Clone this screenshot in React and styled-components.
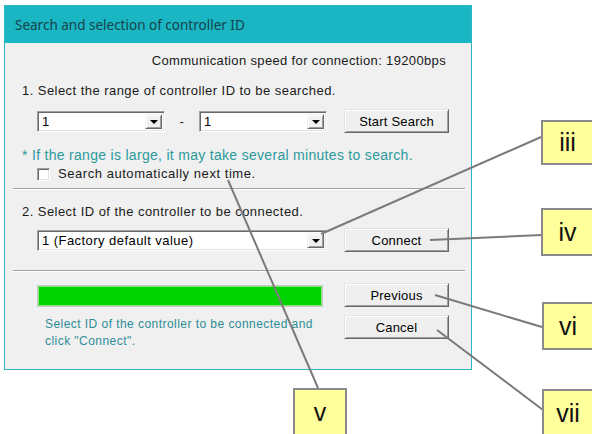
import React from "react";
import styled, { createGlobalStyle } from "styled-components";

const Global = createGlobalStyle`
  html, body { margin: 0; padding: 0; background: #fff; }
  body { font-family: "Liberation Sans", Arial, sans-serif; }
`;

const Page = styled.div`
  position: relative;
  width: 592px;
  height: 434px;
  overflow: hidden;
  background: #fff;
`;

const Dialog = styled.div`
  margin: 5px 0 0 4px;
  width: 466px;
  border: 1px solid #2bb8c4;
  background: #f0f0f0;
`;

const TitleBar = styled.div`
  height: 37px;
  background: #1bb6c4;
  display: flex;
  align-items: center;
  padding-left: 10px;
  font-family: "Noto Sans", "Open Sans", sans-serif;
  font-size: 13.5px;
  color: #17434a;
`;

const Body = styled.div`
  padding: 10px 0 19px 0;
  font-size: 13px;
  letter-spacing: 0.45px;
  color: #1a1a1a;
`;

const SpeedLine = styled.div`
  text-align: right;
  padding-right: 25px;
  line-height: 16px;
  letter-spacing: 0.35px;
`;

const Label = styled.div`
  line-height: 16px;
  padding-left: 17px;
  margin-top: ${(p) => p.$mt}px;
`;

const Note = styled.div`
  line-height: 16px;
  padding-left: 17px;
  margin-top: 14px;
  color: #2b9a9c;
  font-size: 14px;
  letter-spacing: 0.3px;
`;

const Row = styled.div`
  display: flex;
  align-items: center;
  padding-left: 32px;
  margin-top: ${(p) => p.$mt}px;
  height: 24px;
`;

const Combo = styled.div`
  width: ${(p) => p.$w}px;
  height: 21px;
  box-sizing: border-box;
  background: #fff;
  border: 1px solid;
  border-color: #a0a0a0 #ffffff #ffffff #a0a0a0;
  box-shadow: inset 1px 1px #696969, inset -1px -1px #e3e3e3;
  display: flex;
  align-items: stretch;
`;

const ComboText = styled.div`
  flex: 1;
  padding-left: 4px;
  line-height: 19px;
  font-size: 13px;
  color: #000;
  white-space: nowrap;
`;

const ArrowBtn = styled.div`
  width: 17px;
  margin: 2px 2px 2px 0;
  box-sizing: border-box;
  background: #f0f0f0;
  border: 1px solid;
  border-color: #f0f0f0 #696969 #696969 #f0f0f0;
  box-shadow: inset 1px 1px #fff, inset -1px -1px #a0a0a0;
  display: flex;
  align-items: center;
  justify-content: center;
`;

const Triangle = styled.div`
  width: 0;
  height: 0;
  border-left: 4px solid transparent;
  border-right: 4px solid transparent;
  border-top: 4px solid #000;
  margin-top: 1px;
`;

const Dash = styled.div`
  width: 34px;
  text-align: center;
  font-size: 13px;
`;

const Button = styled.div`
  width: 105px;
  height: 24px;
  box-sizing: border-box;
  margin-left: ${(p) => p.$ml || 0}px;
  background: #efefef;
  border: 1px solid;
  border-color: #e3e3e3 #696969 #696969 #e3e3e3;
  box-shadow: inset 1px 1px #fff, inset -1px -1px #a0a0a0;
  display: flex;
  align-items: center;
  justify-content: center;
  font-size: 13px;
  letter-spacing: 0.2px;
  color: #000;
`;

const CheckRow = styled.label`
  display: flex;
  align-items: center;
  padding-left: 32px;
  margin-top: 3px;
  height: 16px;
  line-height: 16px;
  letter-spacing: 0.55px;
`;

const CheckBox = styled.span`
  width: 13px;
  height: 13px;
  box-sizing: border-box;
  background: #fff;
  border: 1px solid;
  border-color: #a0a0a0 #fff #fff #a0a0a0;
  box-shadow: inset 1px 1px #696969, inset -1px -1px #e3e3e3;
  margin-right: 8px;
`;

const Separator = styled.div`
  margin: ${(p) => p.$mt}px 6px 0 8px;
  height: 0;
  border-top: 1px solid #a0a0a0;
  border-bottom: 1px solid #ffffff;
`;

const Footer = styled.div`
  display: flex;
  padding-left: 32px;
  margin-top: 11px;
`;

const FooterLeft = styled.div`
  width: 286px;
  display: flex;
  flex-direction: column;
`;

const Progress = styled.div`
  margin-top: 2px;
  height: 22px;
  box-sizing: border-box;
  border: 1px solid #c8c8c8;
  background: #00d400;
  box-shadow: inset 0 0 0 1px #7fe07f;
`;

const Hint = styled.div`
  margin-top: 9px;
  padding-left: 8px;
  font-size: 12px;
  line-height: 17px;
  letter-spacing: 0.45px;
  white-space: nowrap;
  color: #2d8d96;
`;

const ButtonCol = styled.div`
  display: flex;
  flex-direction: column;
  gap: 8px;
  margin-left: 21px;
`;

const Callout = styled.div`
  position: absolute;
  left: ${(p) => p.$x}px;
  top: ${(p) => p.$y}px;
  width: ${(p) => p.$w}px;
  height: ${(p) => p.$h}px;
  box-sizing: border-box;
  background: #ffff9c;
  border: 2px solid #8a8a8a;
  display: flex;
  align-items: center;
  justify-content: center;
  font-family: "Liberation Sans", Arial, sans-serif;
  font-size: 25px;
  color: #111;
`;

const Leaders = styled.svg`
  position: absolute;
  left: 0;
  top: 0;
  pointer-events: none;
`;

export default function App() {
  const lines = [
    [321, 234, 541, 137],
    [430, 240, 542, 235],
    [435, 295, 542, 327],
    [437, 330, 543, 410],
    [228, 180, 318, 388],
  ];
  return (
    <>
      <Global />
      <Page>
        <Dialog>
          <TitleBar>Search and selection of controller ID</TitleBar>
          <Body>
            <SpeedLine>Communication speed for connection: 19200bps</SpeedLine>
            <Label $mt={14}>1. Select the range of controller ID to be searched.</Label>
            <Row $mt={10}>
              <Combo $w={128}>
                <ComboText>1</ComboText>
                <ArrowBtn><Triangle /></ArrowBtn>
              </Combo>
              <Dash>-</Dash>
              <Combo $w={128}>
                <ComboText>1</ComboText>
                <ArrowBtn><Triangle /></ArrowBtn>
              </Combo>
              <Button $ml={17}>Start Search</Button>
            </Row>
            <Note>* If the range is large, it may take several minutes to search.</Note>
            <CheckRow>
              <CheckBox />
              Search automatically next time.
            </CheckRow>
            <Separator $mt={6} />
            <Label $mt={14}>2. Select ID of the controller to be connected.</Label>
            <Row $mt={8}>
              <Combo $w={290}>
                <ComboText>1 (Factory default value)</ComboText>
                <ArrowBtn><Triangle /></ArrowBtn>
              </Combo>
              <Button $ml={17}>Connect</Button>
            </Row>
            <Separator $mt={18} />
            <Footer>
              <FooterLeft>
                <Progress />
                <Hint>
                  Select ID of the controller to be connected and
                  <br />
                  click "Connect".
                </Hint>
              </FooterLeft>
              <ButtonCol>
                <Button>Previous</Button>
                <Button>Cancel</Button>
              </ButtonCol>
            </Footer>
          </Body>
        </Dialog>
        <Leaders width="592" height="434" viewBox="0 0 592 434">
          {lines.map(([x1, y1, x2, y2], i) => (
            <line key={i} x1={x1} y1={y1} x2={x2} y2={y2} stroke="#7a7a7a" strokeWidth="2" />
          ))}
        </Leaders>
        <Callout $x={541} $y={120} $w={53} $h={45}>iii</Callout>
        <Callout $x={541} $y={208} $w={53} $h={48}>iv</Callout>
        <Callout $x={542} $y={302} $w={52} $h={48}>vi</Callout>
        <Callout $x={542} $y={389} $w={52} $h={48}>vii</Callout>
        <Callout $x={293} $y={388} $w={54} $h={48}>v</Callout>
      </Page>
    </>
  );
}
